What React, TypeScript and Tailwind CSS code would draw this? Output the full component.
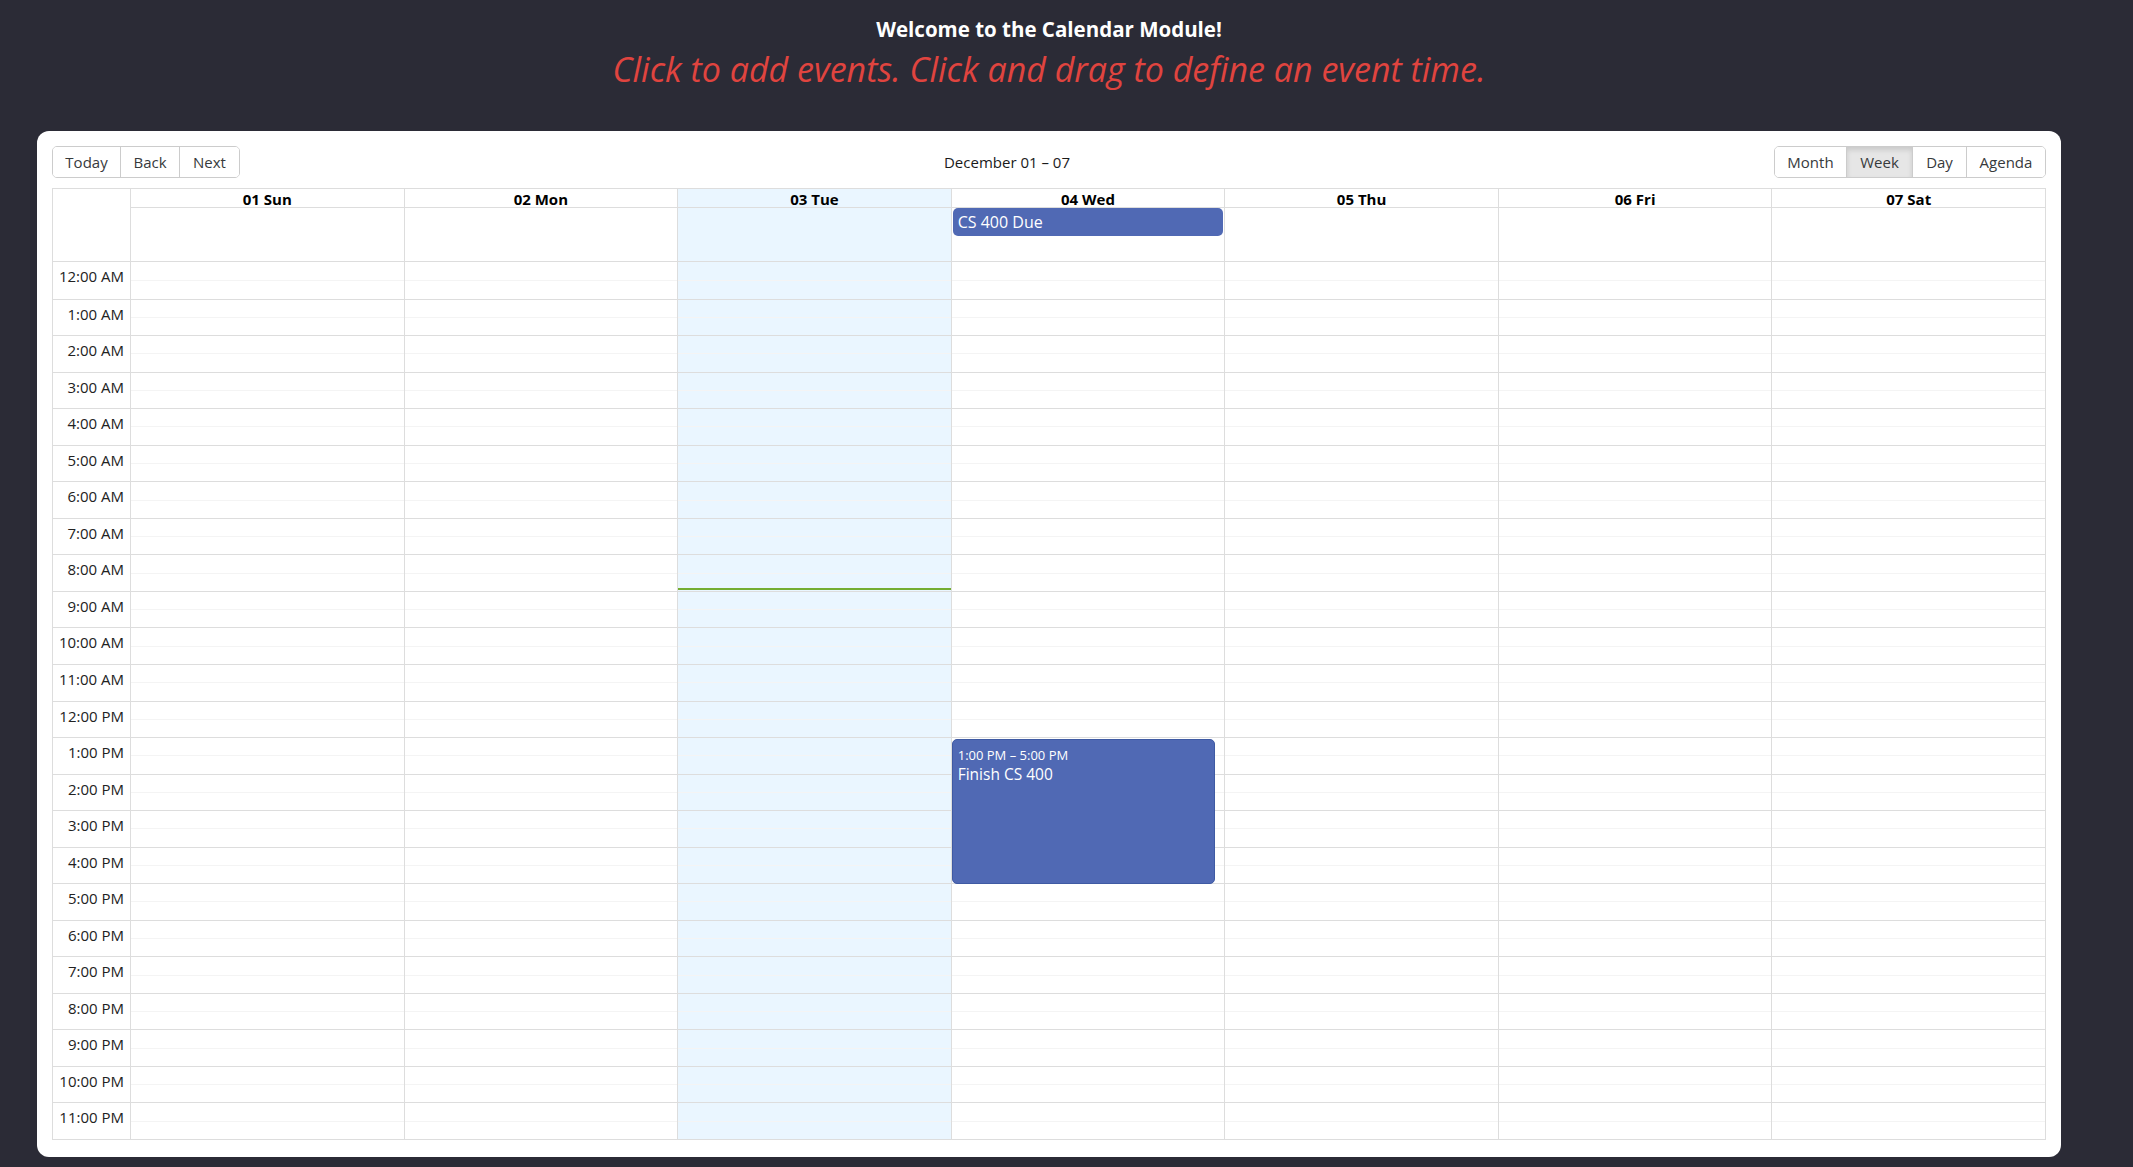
import React from "react";

const days = ["01 Sun", "02 Mon", "03 Tue", "04 Wed", "05 Thu", "06 Fri", "07 Sat"];
const hours = Array.from({ length: 24 }, (_, i) => {
  const h = i % 12 === 0 ? 12 : i % 12;
  return `${h}:00 ${i < 12 ? "AM" : "PM"}`;
});

const font = { fontFamily: '"Open Sans", "Noto Sans", sans-serif' };

function BtnGroup({ items, active }: { items: [string, number][]; active?: string }) {
  return (
    <div className="flex h-[32px] rounded-[5px] border border-[#cccccc] overflow-hidden">
      {items.map(([label, w], i) => (
        <div
          key={label}
          style={{ width: w }}
          className={
            "flex items-center justify-center text-[15px] text-[#373a3c] " +
            (i > 0 ? "border-l border-[#cccccc] " : "") +
            (label === active ? "bg-[#e6e6e6] shadow-[inset_0_3px_5px_rgba(0,0,0,0.125)] border-[#adadad]" : "bg-white")
          }
        >
          {label}
        </div>
      ))}
    </div>
  );
}

export default function App() {
  return (
    <div className="min-h-[1167px] bg-[#2b2b36]" style={font}>
      <div className="ml-[37px] w-[2024px] pt-[14px]">
        <h1 className="text-center text-[20.5px] leading-[30px] font-bold text-white">
          Welcome to the Calendar Module!
        </h1>
        <p className="mt-[2px] text-center text-[34px] leading-[46px] italic text-[#e0443f]">
          Click to add events. Click and drag to define an event time.
        </p>
        <div className="mt-[39px] rounded-[12px] bg-white px-[15px] pt-[15px] pb-[17px]">
          <div className="flex items-center">
            <BtnGroup items={[["Today", 67], ["Back", 59], ["Next", 60]]} />
            <div className="flex-1 text-center text-[15px] text-[#1a1a1a]">December 01 – 07</div>
            <BtnGroup items={[["Month", 71], ["Week", 66], ["Day", 54], ["Agenda", 79]]} active="Week" />
          </div>
          <div className="mt-[10px] border border-[#dddddd]">
            <div className="flex border-b border-[#dddddd]">
              <div className="w-[77px] shrink-0" />
              <div className="grid flex-1 grid-cols-7">
                {days.map((d, i) => (
                  <div key={d} className={"flex flex-col border-l border-[#dddddd] " + (i === 2 ? "bg-[#eaf6ff]" : "")}>
                    <div className="h-[19px] border-b border-[#dddddd] text-center text-[15px] leading-[20px] font-bold text-black">
                      {d}
                    </div>
                    <div className="h-[53px] pt-0">
                      {i === 3 && (
                        <div className="mx-[1px] mr-[1px] h-[28px] rounded-[5px] bg-[#5069b4] pl-[5px] text-[16px] leading-[28px] text-white">
                          CS 400 Due
                        </div>
                      )}
                    </div>
                  </div>
                ))}
              </div>
            </div>
            <div className="flex h-[877px]">
              <div className="grid w-[77px] shrink-0 grid-rows-[repeat(24,minmax(0,1fr))]">
                {hours.map((h, i) => (
                  <div key={h} className={"pr-[6px] pt-[4px] text-right text-[15px] leading-[20px] text-[#222222] " + (i > 0 ? "border-t border-[#dddddd]" : "")}>
                    {h}
                  </div>
                ))}
              </div>
              <div className="grid flex-1 grid-cols-7">
                {days.map((d, di) => (
                  <div key={d} className={"relative grid grid-rows-[repeat(24,minmax(0,1fr))] border-l border-[#dddddd] " + (di === 2 ? "bg-[#eaf6ff]" : "")}>
                    {hours.map((h, i) => (
                      <div key={h} className={"flex flex-col " + (i > 0 ? "border-t border-[#dddddd]" : "")}>
                        <div className="flex-1 border-b border-[#f4f4f4]" />
                        <div className="flex-1" />
                      </div>
                    ))}
                    {di === 2 && <div className="absolute left-0 right-0 top-[326px] h-[1.5px] bg-[#74ad31]" />}
                    {di === 3 && (
                      <div className="absolute left-0 right-[9px] top-[477px] h-[145px] rounded-[5px] border border-[#3f5aa3] bg-[#5069b4] px-[5px] pt-[6px] text-white">
                        <div className="text-[13px] leading-[18px]">1:00 PM – 5:00 PM</div>
                        <div className="text-[15.5px] leading-[21px]">Finish CS 400</div>
                      </div>
                    )}
                  </div>
                ))}
              </div>
            </div>
          </div>
        </div>
      </div>
    </div>
  );
}
